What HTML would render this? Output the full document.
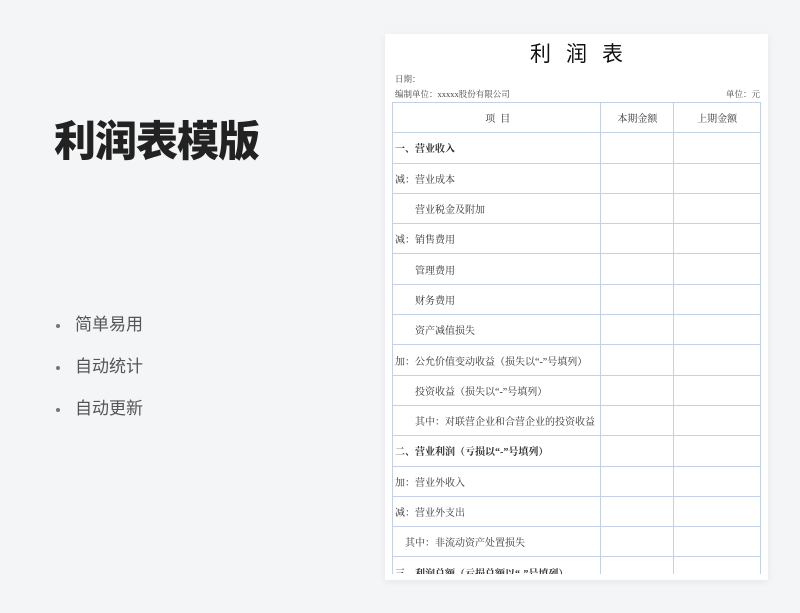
<!DOCTYPE html>
<html><head><meta charset="utf-8"><style>
*{margin:0;padding:0;box-sizing:border-box}
body{width:800px;height:613px;background:#f4f5f7;position:relative;overflow:hidden;font-family:"Liberation Sans","Noto Sans CJK SC",sans-serif}
.title{position:absolute;left:54px;top:116px;font-size:42px;font-weight:900;color:#222;letter-spacing:-1px;line-height:52px}
.b{position:absolute;left:75px;font-size:17px;color:#555;line-height:20px}
.b:before{content:"";position:absolute;left:-19px;top:9px;width:4px;height:4px;border-radius:50%;background:#777}
.paper{position:absolute;left:385px;top:34px;width:383px;height:546px;background:#fff;box-shadow:0 2px 8px rgba(0,0,0,.06);overflow:hidden;font-family:"Liberation Serif","Noto Serif CJK SC",serif;color:#333}
.pt{position:absolute;left:0;width:383px;top:4px;text-align:center;font-size:21px;letter-spacing:15px;text-indent:15px;color:#111;font-family:"Liberation Sans","Noto Sans CJK SC",sans-serif}
.sm{position:absolute;font-size:8.5px;color:#444}
.grid{position:absolute;left:7px;top:68px;width:369px;border-top:1px solid #c3d0e6;border-left:1px solid #c3d0e6}
.r{display:flex;height:30.3px;border-bottom:1px solid #c3d0e6}
.r div{border-right:1px solid #c3d0e6;display:flex;align-items:center;font-size:10px;white-space:nowrap}
.c1{width:209px;padding-left:2px}.c2{width:73px}.c3{width:87px}
.h div{justify-content:center}
.bd{font-weight:bold}
</style></head><body>
<div class="title">利润表模版</div>
<div class="b" style="top:315px">简单易用</div>
<div class="b" style="top:357px">自动统计</div>
<div class="b" style="top:399px">自动更新</div>
<div class="paper">
<div class="pt">利润表</div>
<div class="sm" style="left:10px;top:39px">日期：</div>
<div class="sm" style="left:10px;top:54px">编制单位：xxxxx股份有限公司</div>
<div class="sm" style="right:8px;top:54px">单位：元</div>
<div class="grid">
<div class="r h"><div class="c1">项&nbsp;&nbsp;目</div><div class="c2">本期金额</div><div class="c3">上期金额</div></div>
<div class="r"><div class="c1 bd">一、营业收入</div><div class="c2"></div><div class="c3"></div></div>
<div class="r"><div class="c1">减：营业成本</div><div class="c2"></div><div class="c3"></div></div>
<div class="r"><div class="c1" style="padding-left:22px">营业税金及附加</div><div class="c2"></div><div class="c3"></div></div>
<div class="r"><div class="c1">减：销售费用</div><div class="c2"></div><div class="c3"></div></div>
<div class="r"><div class="c1" style="padding-left:22px">管理费用</div><div class="c2"></div><div class="c3"></div></div>
<div class="r"><div class="c1" style="padding-left:22px">财务费用</div><div class="c2"></div><div class="c3"></div></div>
<div class="r"><div class="c1" style="padding-left:22px">资产减值损失</div><div class="c2"></div><div class="c3"></div></div>
<div class="r"><div class="c1">加：公允价值变动收益（损失以“-”号填列）</div><div class="c2"></div><div class="c3"></div></div>
<div class="r"><div class="c1" style="padding-left:22px">投资收益（损失以“-”号填列）</div><div class="c2"></div><div class="c3"></div></div>
<div class="r"><div class="c1" style="padding-left:22px">其中：对联营企业和合营企业的投资收益</div><div class="c2"></div><div class="c3"></div></div>
<div class="r"><div class="c1 bd">二、营业利润（亏损以“-”号填列）</div><div class="c2"></div><div class="c3"></div></div>
<div class="r"><div class="c1">加：营业外收入</div><div class="c2"></div><div class="c3"></div></div>
<div class="r"><div class="c1">减：营业外支出</div><div class="c2"></div><div class="c3"></div></div>
<div class="r"><div class="c1" style="padding-left:12px">其中：非流动资产处置损失</div><div class="c2"></div><div class="c3"></div></div>
<div class="r"><div class="c1 bd">三、利润总额（亏损总额以“-”号填列）</div><div class="c2"></div><div class="c3"></div></div>
</div>
<div style="position:absolute;left:0;top:540px;width:383px;height:10px;background:#fff"></div>
</div>
</body></html>
